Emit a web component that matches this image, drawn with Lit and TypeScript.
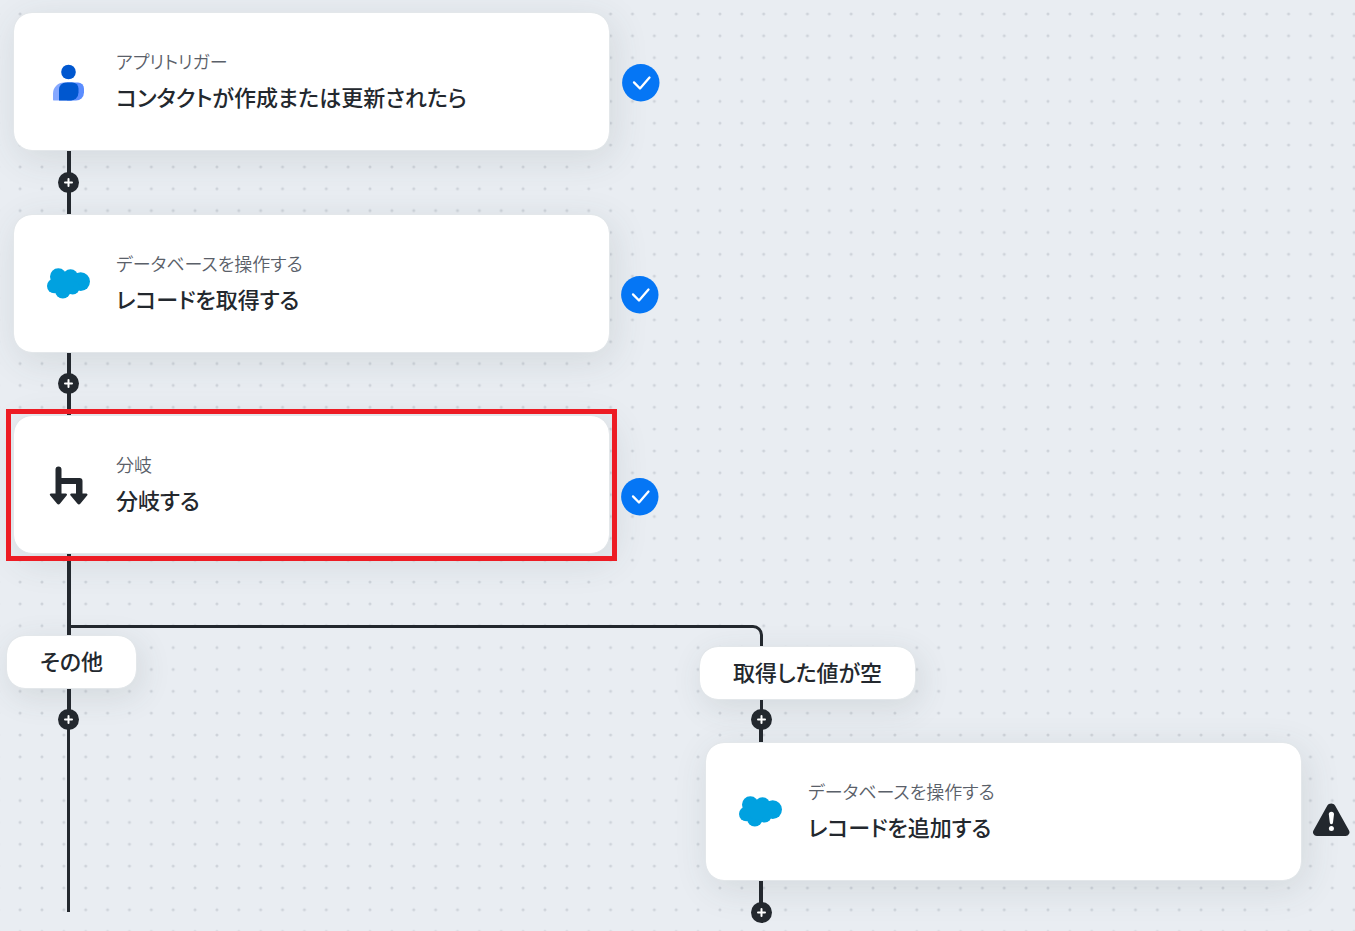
import { LitElement, html, svg, css, type TemplateResult } from "lit";
import { customElement, property } from "lit/decorators.js";
import { styleMap } from "lit/directives/style-map.js";

type IconName = "contact" | "cloud" | "branch";

interface Step {
  x: number;
  y: number;
  icon: IconName;
  kind: string;
  title: string;
}

interface Point {
  x: number;
  y: number;
}

const STEPS: Step[] = [
  { x: 13, y: 12, icon: "contact", kind: "アプリトリガー", title: "コンタクトが作成または更新されたら" },
  { x: 13, y: 214, icon: "cloud", kind: "データベースを操作する", title: "レコードを取得する" },
  { x: 13, y: 415, icon: "branch", kind: "分岐", title: "分岐する" },
  { x: 705, y: 742, icon: "cloud", kind: "データベースを操作する", title: "レコードを追加する" },
];

const BRANCHES = [
  { x: 6, y: 635, label: "その他" },
  { x: 699, y: 646, label: "取得した値が空" },
];

const ADD_POINTS: Point[] = [
  { x: 58, y: 172 },
  { x: 58, y: 373 },
  { x: 58, y: 709 },
  { x: 751, y: 709 },
  { x: 751, y: 902 },
];

const CHECKS: Point[] = [
  { x: 622, y: 64 },
  { x: 621, y: 276 },
  { x: 621, y: 478 },
];

const at = (p: Point) => styleMap({ left: `${p.x}px`, top: `${p.y}px` });

const ICONS: Record<IconName, TemplateResult> = {
  contact: html`<svg width="43" height="43" viewBox="0 -2.500 43 43" aria-hidden="true">
    <path d="M6 37.500V31a11 11 0 0 1 11-11h8v18H7.500A1.500 1.500 0 0 1 6 37.500Z" fill="#85a8ff" />
    <path d="M20 20h11a6 6 0 0 1 6 6v4a8 8 0 0 1-8 8H20Z" fill="#5b8dff" />
    <path d="M12 38V27a7 7 0 0 1 7-7h6.500a6 6 0 0 1 6 6v4a8 8 0 0 1-8 8Z" fill="#0057cf" />
    <circle cx="21.500" cy="9.500" r="7.300" fill="#0057cf" />
  </svg>`,
  cloud: html`<svg width="43" height="43" viewBox="0 0 43 43" aria-hidden="true">
    <g fill="#00a1e0">
      <circle cx="11.300" cy="14.500" r="8.300" />
      <circle cx="23.500" cy="15" r="7.700" />
      <circle cx="33.700" cy="19.600" r="9.300" />
      <circle cx="7.300" cy="24" r="7.300" />
      <circle cx="15.800" cy="28.800" r="7.700" />
      <circle cx="25.700" cy="25.600" r="6.900" />
      <circle cx="18" cy="21" r="9" />
    </g>
  </svg>`,
  branch: html`<svg width="43" height="43" viewBox="0 -1 43 43" aria-hidden="true">
    <path
      d="M8.500 5.400a3 3 0 0 1 6 0V14h18a3 3 0 0 1 3 3v12.500h3.700a1.200 1.200 0 0 1 .9 2.100l-6.600 8a2.100 2.100 0 0 1-3.200 0l-6.700-8a1.200 1.200 0 0 1 .9-2.100h4.500V20H14.500v9.500h4.200a1.200 1.200 0 0 1 .9 2.100l-6.500 8a2.100 2.100 0 0 1-3.200 0l-6.700-8a1.200 1.200 0 0 1 .9-2.100h4.400Z"
      fill="#23282e"
    />
  </svg>`,
};

@customElement("flow-step")
class FlowStep extends LitElement {
  @property({ attribute: false }) step!: Step;

  static styles = css`
    :host {
      display: block;
    }
    .card {
      box-sizing: border-box;
      width: 597px;
      min-height: 139px;
      display: flex;
      align-items: center;
      gap: 26px;
      padding: 24px 33px;
      background: #fff;
      background-clip: padding-box;
      border: 1px solid #e3e7ea;
      border-radius: 19px;
      box-shadow: 4px 8px 36px rgba(60, 70, 75, 0.12);
    }
    .icon {
      flex: none;
      display: flex;
    }
    .text {
      padding-bottom: 4px;
    }
    .kind,
    .title {
      margin: 0;
      white-space: nowrap;
    }
    .kind {
      font-size: 18px;
      line-height: 33px;
      font-weight: 350;
      color: #5a6069;
    }
    .title {
      font-size: 22px;
      line-height: 36px;
      font-weight: 500;
      color: #23282e;
    }
  `;

  render() {
    return html`<article class="card">
      <span class="icon">${ICONS[this.step.icon]}</span>
      <div class="text">
        <p class="kind">${this.step.kind}</p>
        <h2 class="title">${this.step.title}</h2>
      </div>
    </article>`;
  }
}

@customElement("app-root")
class AppRoot extends LitElement {
  static styles = css`
    :host {
      display: block;
      font-family: "Noto Sans CJK JP", "Noto Sans", sans-serif;
      font-feature-settings: "palt";
      color: #23282e;
    }
    .canvas {
      position: relative;
      min-height: 100vh;
      overflow: hidden;
      background: #e9edf2;
    }
    .layer {
      position: absolute;
      inset: 0;
      width: 100%;
      height: 100%;
    }
    .node {
      position: absolute;
    }
    .pill {
      box-sizing: border-box;
      min-height: 54px;
      padding: 0 33px 4px;
      font-size: 22px;
      line-height: 48px;
      font-weight: 500;
      white-space: nowrap;
      background: #fff;
      background-clip: padding-box;
      border: 1px solid #e3e7ea;
      border-radius: 19px;
      box-shadow: 4px 8px 32px rgba(60, 70, 75, 0.12);
    }
    .add {
      width: 21px;
      height: 21px;
      padding: 0;
      border: 0;
      border-radius: 50%;
      background: #23282e;
      display: flex;
      cursor: pointer;
    }
    .badge {
      display: flex;
    }
    .focus {
      box-sizing: border-box;
      width: 611px;
      height: 152px;
      border: 5px solid #ed1c24;
      pointer-events: none;
    }
  `;

  private grid() {
    return html`<svg class="layer" aria-hidden="true">
      <defs>
        <pattern id="dots" x="9.200" y="3" width="21.870" height="21.850" patternUnits="userSpaceOnUse">
          <circle cx="10.900" cy="10.900" r="1.500" fill="#ced3da" />
        </pattern>
      </defs>
      <rect width="100%" height="100%" fill="url(#dots)" />
    </svg>`;
  }

  private connectors() {
    const thick = ["M69 151V214", "M69 353V415", "M69 554V635", "M69 689V719", "M761 719V742", "M761 881V912"];
    const thin = ["M68.500 719V912", "M69 626.500H753a8.500 8.500 0 0 1 8.500 8.500V646", "M761.500 700V719"];
    return html`<svg class="layer" fill="none" stroke="#23282e" aria-hidden="true">
      ${thick.map((d) => svg`<path d=${d} stroke-width="4" />`)}
      ${thin.map((d) => svg`<path d=${d} stroke-width="3" />`)}
    </svg>`;
  }

  render() {
    return html`<main class="canvas">
      ${this.grid()}
      ${STEPS.map((s) => html`<flow-step class="node" style=${at(s)} .step=${s}></flow-step>`)}
      ${BRANCHES.map((b) => html`<div class="node pill" style=${at(b)}>${b.label}</div>`)}
      ${this.connectors()}
      ${ADD_POINTS.map(
        (p) => html`<button class="node add" type="button" aria-label="ステップを追加" style=${at(p)}>
          <svg width="21" height="21" viewBox="0 0 21 21" aria-hidden="true">
            <path d="M10.500 7v7M7 10.500h7" stroke="#fff" stroke-width="2" stroke-linecap="round" />
          </svg>
        </button>`,
      )}
      ${CHECKS.map(
        (p) => html`<span class="node badge" style=${at(p)}>
          <svg width="38" height="38" viewBox="0 0 38 38" aria-hidden="true">
            <circle cx="18.800" cy="18.700" r="18.700" fill="#0576f5" />
            <path d="M12 18.400L18 24.500L27.500 13.500" fill="none" stroke="#fff" stroke-width="2.300" stroke-linecap="round" stroke-linejoin="round" />
          </svg>
        </span>`,
      )}
      <span class="node badge" style=${at({ x: 1313, y: 803 })}>
        <svg width="37" height="34" viewBox="0 0 37 34" aria-hidden="true">
          <path d="M14.200 2.700a4.700 4.700 0 0 1 8 0L35.900 27.200a3.800 3.800 0 0 1-3.300 5.800H3.800A3.800 3.800 0 0 1 .6 27.200Z" fill="#23282e" />
          <path d="M15.800 11.300a2.600 2.600 0 0 1 5.200 0L20 19.600a1.600 1.600 0 0 1-3.200 0Z" fill="#fff" />
          <circle cx="18.400" cy="25.600" r="2.500" fill="#fff" />
        </svg>
      </span>
      <div class="node focus" style=${at({ x: 6, y: 409 })}></div>
    </main>`;
  }
}
